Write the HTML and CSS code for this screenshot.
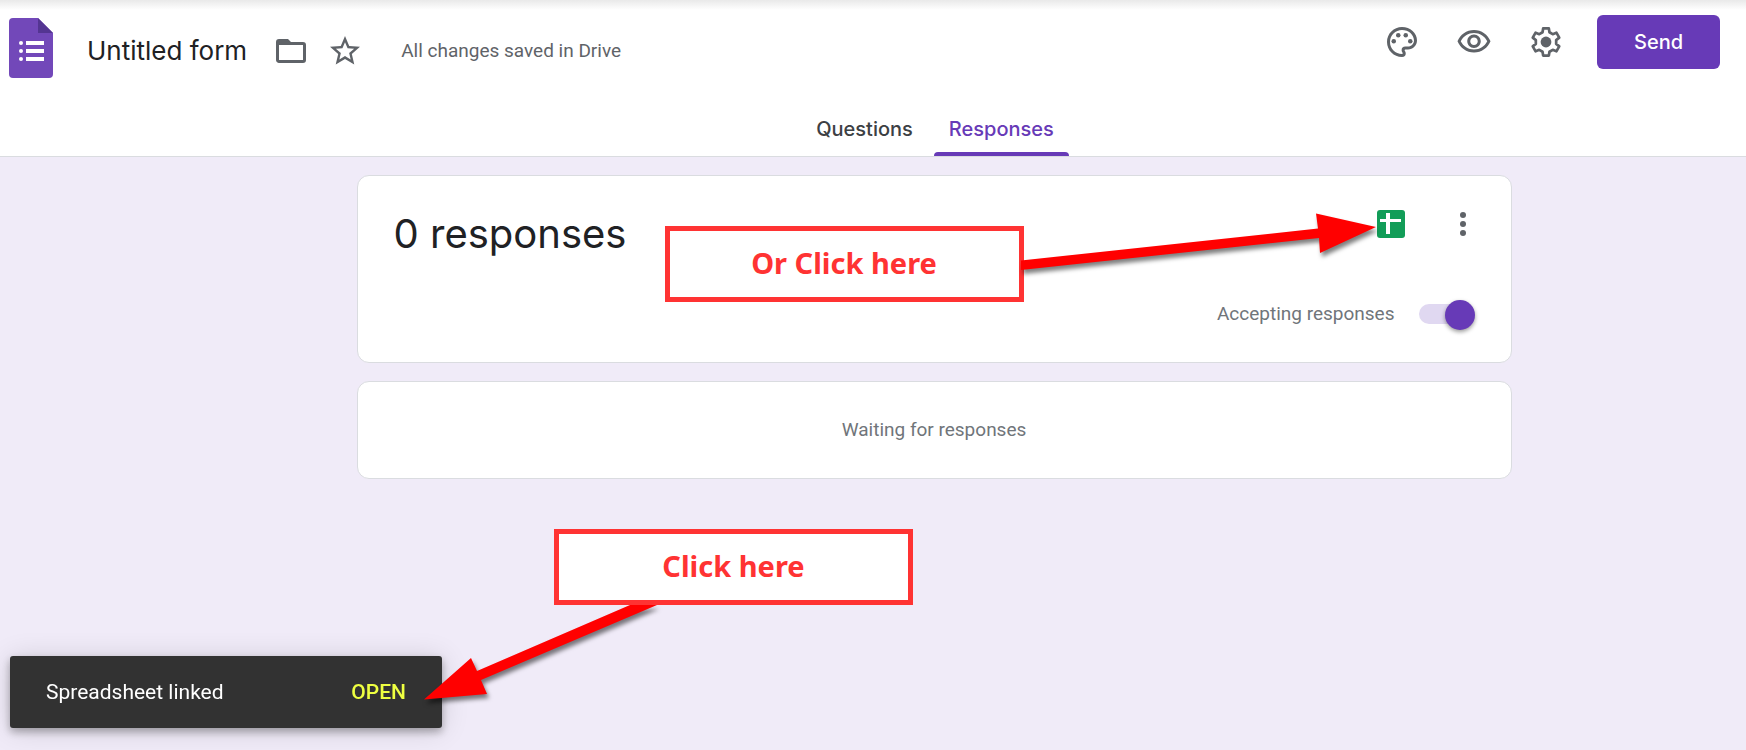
FILE: index.html
```html
<!DOCTYPE html>
<html lang="en">
<head>
<meta charset="utf-8">
<title>Untitled form</title>
<link rel="stylesheet" href="styles.css">
</head>
<body>
<header class="header">
  <div class="topbar">
    <svg class="logo" viewBox="0 0 44 60" aria-hidden="true">
      <path fill="#7248b9" d="M4 0h25l15 15v41a4 4 0 0 1-4 4H4a4 4 0 0 1-4-4V4a4 4 0 0 1 4-4z"/>
      <path fill="#543592" d="M29 0l15 15H29z"/>
      <g fill="#fff"><circle cx="12" cy="25" r="2"/><circle cx="12" cy="33" r="2"/><circle cx="12" cy="41" r="2"/><path d="M17 23h18v4H17zM17 31h18v4H17zM17 39h18v4H17z"/></g>
    </svg>
    <h1 class="title">Untitled form</h1>
    <button class="icon-button" aria-label="Move to folder">
      <svg class="icon" viewBox="0 0 24 24"><path d="M20 6h-8l-2-2H4a2 2 0 0 0-2 2v12c0 1.100.9 2 2 2h16a2 2 0 0 0 2-2V8a2 2 0 0 0-2-2zm0 12H4V8h16z"/></svg>
    </button>
    <button class="icon-button star" aria-label="Star">
      <svg class="icon" viewBox="0 0 24 24"><path d="M22 9.240l-7.190-.62L12 2 9.190 8.630 2 9.240l5.460 4.730L5.820 21 12 17.270 18.180 21l-1.630-7.030zM12 15.400l-3.760 2.270 1-4.280-3.320-2.880 4.380-.38L12 6.100l1.710 4.040 4.380.38-3.320 2.880 1 4.280z"/></svg>
    </button>
    <p class="saved">All changes saved in Drive</p>
    <div class="actions">
      <button class="icon-button" aria-label="Customize theme">
        <svg class="icon" viewBox="0 0 24 24"><path d="M12 22C6.490 22 2 17.510 2 12S6.490 2 12 2s10 4.040 10 9c0 3.310-2.690 6-6 6h-1.770c-.28 0-.5.22-.5.5 0 .12.05.23.13.33.41.47.64 1.060.64 1.670A2.500 2.500 0 0 1 12 22zm0-18c-4.410 0-8 3.590-8 8s3.590 8 8 8c.28 0 .5-.22.5-.5a.54.54 0 0 0-.14-.35c-.41-.46-.63-1.050-.63-1.650a2.500 2.500 0 0 1 2.500-2.500H16c2.210 0 4-1.790 4-4 0-3.860-3.590-7-8-7z"/><circle cx="6.500" cy="11.500" r="1.500"/><circle cx="9.500" cy="7.500" r="1.500"/><circle cx="14.500" cy="7.500" r="1.500"/><circle cx="17.500" cy="11.500" r="1.500"/></svg>
      </button>
      <button class="icon-button" aria-label="Preview">
        <svg class="icon" viewBox="0 0 24 24"><path d="M12 6c3.790 0 7.170 2.130 8.820 5.500C19.170 14.870 15.790 17 12 17s-7.170-2.130-8.820-5.500C4.830 8.130 8.210 6 12 6m0-2C7 4 2.730 7.110 1 11.500 2.730 15.890 7 19 12 19s9.270-3.110 11-7.500C21.270 7.110 17 4 12 4zm0 5c1.380 0 2.500 1.120 2.500 2.500S13.380 14 12 14s-2.500-1.120-2.500-2.500S10.620 9 12 9m0-2c-2.480 0-4.500 2.020-4.500 4.500S9.520 16 12 16s4.500-2.020 4.500-4.500S14.480 7 12 7z"/></svg>
      </button>
      <button class="icon-button" aria-label="Settings">
        <svg class="icon" viewBox="-12 -12 24 24"><path class="gear" d="M-2.300-6.500L-1.900-9.100H1.900L2.300-6.500 4.480-5.240 6.930-6.200 8.830-2.900 6.780-1.260V1.260L8.830 2.900 6.930 6.200 4.480 5.240 2.300 6.500 1.900 9.100H-1.900L-2.300 6.500-4.480 5.240-6.930 6.200-8.830 2.900-6.780 1.260V-1.260L-8.830-2.900-6.930-6.200-4.480-5.240z"/><circle r="3.600"/></svg>
      </button>
      <button class="send">Send</button>
    </div>
  </div>
  <nav class="tabs">
    <a class="tab" href="#questions">Questions</a>
    <a class="tab tab-active" href="#responses" aria-current="page">Responses</a>
  </nav>
</header>

<main class="content">
  <section class="card summary">
    <div class="row">
      <h2 class="count">0 responses</h2>
      <div class="tools">
        <button class="icon-button" aria-label="View responses in Sheets">
          <svg class="icon" viewBox="0 0 36 36"><rect x="4" y="4" width="28" height="28" rx="3" fill="#129d58"/><path fill="#fff" d="M13 7h4v6h11v3H17v12h-4V16H7v-3h6z"/></svg>
        </button>
        <button class="icon-button" aria-label="More options">
          <svg class="icon" viewBox="0 0 36 36"><circle cx="18" cy="9" r="3"/><circle cx="18" cy="18" r="3"/><circle cx="18" cy="27" r="3"/></svg>
        </button>
      </div>
    </div>
    <div class="accept">
      <label for="accepting">Accepting responses</label>
      <input class="switch" id="accepting" type="checkbox" role="switch" checked>
    </div>
    <p class="callout callout-sheet">Or Click here</p>
    <svg class="arrow arrow-sheet" viewBox="0 0 370 70" aria-hidden="true"><path d="M5 56.500L302 24.500 300 9.500 360 23 304 49 303 34 5 66z"/></svg>
  </section>
  <section class="card waiting"><p>Waiting for responses</p></section>
</main>

<div class="toast" role="status">
  <span>Spreadsheet linked</span>
  <button class="open">OPEN</button>
  <svg class="arrow arrow-toast" viewBox="0 0 250 120" aria-hidden="true"><path d="M4 103.500L51 62 57 75 210 9H237L61 84 67 98z"/></svg>
  <p class="callout callout-toast">Click here</p>
</div>
</body>
</html>
```
FILE: styles.css
```css
* {
  box-sizing: border-box;
}

body {
  margin: 0;
  min-height: 100vh;
  background: #f0ebf8;
  color: #202124;
  font-family: Roboto, sans-serif;
  font-size: 19px;
  line-height: 24px;
}

h1, h2, p {
  margin: 0;
  font-weight: 400;
}

button {
  border: 0;
  padding: 0;
  background: none;
  font: inherit;
  cursor: pointer;
}

.header {
  background: linear-gradient(#e9e9e9, #fff 10px);
  border-bottom: 1px solid #dadce0;
}

.topbar {
  display: flex;
  align-items: center;
  height: 102px;
  padding: 0 26px 0 9px;
}

.logo {
  width: 44px;
  height: 60px;
  margin-bottom: 6px;
}

.title {
  margin: 0 26px 0 34px;
  font-family: Inter, sans-serif;
  font-size: 26px;
  line-height: 36px;
}

.icon-button {
  flex: none;
  width: 36px;
  height: 36px;
}

.icon {
  display: block;
  width: 36px;
  height: 36px;
  fill: #5f6368;
}

.gear {
  fill: none;
  stroke: #5f6368;
  stroke-width: 1.8;
  stroke-linejoin: round;
}

.star {
  margin-left: 18px;
}

.saved {
  margin-left: 38px;
  color: #5f6368;
}

.actions {
  display: flex;
  align-items: center;
  gap: 36px;
  margin: 0 0 18px auto;
}

.send {
  width: 123px;
  height: 54px;
  margin-left: -3px;
  border-radius: 6px;
  background: #673ab7;
  color: #fff;
  font: 500 20px/24px Inter, sans-serif;
}

.tabs {
  display: flex;
  justify-content: center;
  gap: 6px;
  padding-left: 124px;
}

.tab {
  height: 54px;
  padding: 15px 15px 0;
  color: #3c4043;
  font: 500 20px/24px Inter, sans-serif;
  text-decoration: none;
}

.tab-active {
  position: relative;
  color: #673ab7;
}

.tab-active::after {
  content: "";
  position: absolute;
  right: 0;
  bottom: 0;
  left: 0;
  height: 4px;
  border-radius: 4px 4px 0 0;
  background: #673ab7;
}

.content {
  display: grid;
  gap: 18px;
  max-width: 1277px;
  margin: 0 auto;
  padding: 18px 0 18px 122px;
}

.card {
  border: 1px solid #dadce0;
  border-radius: 12px;
  background: #fff;
}

.summary {
  position: relative;
  padding: 30px 30px 36px 36px;
}

.row {
  display: flex;
  justify-content: space-between;
}

.count {
  font-family: Inter, sans-serif;
  font-size: 40px;
  line-height: 56px;
}

.tools {
  display: flex;
  gap: 36px;
}

.accept {
  display: flex;
  align-items: center;
  justify-content: flex-end;
  gap: 24px;
  margin-top: 40px;
  padding-right: 8px;
  color: #70757a;
}

.switch {
  appearance: none;
  position: relative;
  width: 54px;
  height: 20px;
  margin: 0;
  border-radius: 10px;
  background: #e0d8f1;
}

.switch::before {
  content: "";
  position: absolute;
  top: -4px;
  right: -2px;
  width: 30px;
  height: 30px;
  border-radius: 50%;
  background: #673ab7;
  box-shadow: 0 2px 4px rgba(0, 0, 0, .4);
}

.waiting {
  padding: 36px;
  color: #70757a;
  text-align: center;
}

.callout {
  position: absolute;
  width: 359px;
  height: 76px;
  border: 5px solid #f33;
  background: #fff;
  color: #f33;
  font: 700 29px/64px "Noto Sans", sans-serif;
  text-align: center;
}

.callout-sheet {
  top: 50px;
  right: 487px;
}

.arrow {
  position: absolute;
  overflow: visible;
  fill: #f00;
  filter: drop-shadow(2px 4px 2px rgba(0, 0, 0, .5));
  pointer-events: none;
}

.arrow-sheet {
  top: 28px;
  right: 125px;
  width: 370px;
  height: 70px;
}

.toast {
  position: fixed;
  bottom: 22px;
  left: 10px;
  display: flex;
  align-items: center;
  justify-content: space-between;
  width: 432px;
  height: 72px;
  padding: 0 36px;
  border-radius: 3px;
  background: #323232;
  color: #fff;
  font-size: 21px;
  box-shadow: 0 4px 8px rgba(0, 0, 0, .3), 0 2px 28px rgba(0, 0, 0, .14);
}

.open {
  color: #eeff41;
  font-weight: 500;
}

.arrow-toast {
  bottom: 12px;
  left: 410px;
  width: 250px;
  height: 120px;
}

.callout-toast {
  bottom: 123px;
  left: 544px;
}
```
